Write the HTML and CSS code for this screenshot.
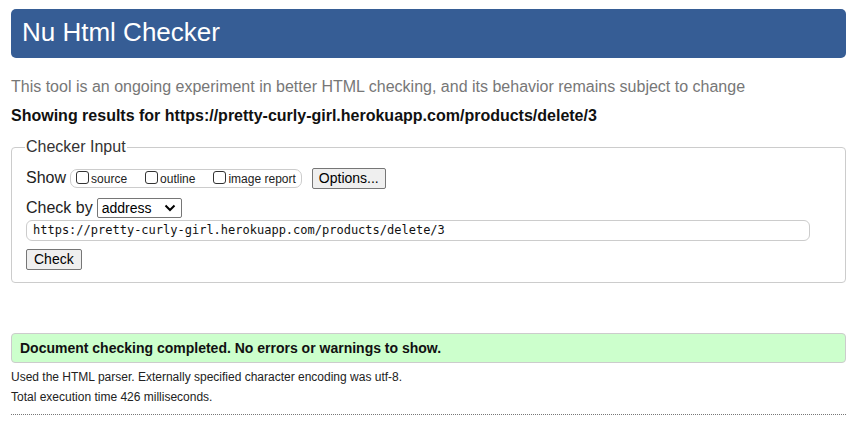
FILE: index.html
```html
<!DOCTYPE html>
<html>
<head>
<meta charset="utf-8">
<title>Nu Html Checker</title>
<link rel="stylesheet" href="styles.css">
</head>
<body>
<div class="page">
  <h1 class="header">Nu Html Checker</h1>
  <p class="intro">This tool is an ongoing experiment in better HTML checking, and its behavior remains subject to change</p>
  <p class="showing">Showing results for https://pretty-curly-girl.herokuapp.com/products/delete/3</p>
  <fieldset class="checker">
    <legend class="legend">Checker Input</legend>
    <div class="row row-show">
      <span class="lbl">Show</span>
      <span class="group">
        <label class="opt"><span class="cb"></span>source</label>
        <label class="opt"><span class="cb"></span>outline</label>
        <label class="opt"><span class="cb"></span>image report</label>
      </span>
      <span class="btn options">Options...</span>
    </div>
    <div class="row row-by">
      <span class="lbl">Check by</span>
      <span class="select">address<svg class="chev" width="12" height="8" viewBox="0 0 12 8"><path d="M1.5 1.5 L6 6 L10.5 1.5" fill="none" stroke="#000" stroke-width="2"/></svg></span>
    </div>
    <div class="url">https://pretty-curly-girl.herokuapp.com/products/delete/3</div>
    <div class="row row-check"><span class="btn check">Check</span></div>
  </fieldset>
  <div class="success">Document checking completed. No errors or warnings to show.</div>
  <p class="meta">Used the HTML parser. Externally specified character encoding was utf-8.</p>
  <p class="meta">Total execution time 426 milliseconds.</p>
  <div class="rule"></div>
</div>
</body>
</html>
```
FILE: styles.css
```css
html, body { margin: 0; padding: 0; background: #fff; }
body { font-family: "Liberation Sans", Arial, sans-serif; color: #222; }
.page { margin: 9px 19px 0 11px; }
.header {
  margin: 0;
  height: 49px;
  box-sizing: border-box;
  background: #365d95;
  border-radius: 5px;
  color: #fff;
  font-weight: normal;
  font-size: 26px;
  line-height: 46px;
  padding-left: 11px;
}
.intro { margin: 19px 0 0 0; font-size: 16px; line-height: 20px; color: #777; }
.showing { margin: 9px 0 0 0; font-size: 16px; line-height: 20px; font-weight: bold; color: #111; }
.checker {
  margin: 12px 0 0 0;
  padding: 4px 14px 12px 14px;
  border: 1px solid #ccc;
  border-radius: 4px;
}
.legend { font-size: 16px; color: #333; padding: 0 1px; margin-left: -1px; line-height: 18px; }
.row { display: flex; align-items: center; }
.lbl { font-size: 16px; color: #222; margin-right: 4px; }
.group {
  display: inline-flex; align-items: center;
  height: 19px; box-sizing: border-box;
  border: 1px solid #ccc; border-radius: 7px;
  padding: 0 5px 0 5px;
}
.opt { display: inline-flex; align-items: center; font-size: 12px; color: #222; margin-right: 18px; padding-top: 1px; }
.opt:last-child { margin-right: 0; }
.cb {
  width: 13px; height: 13px; box-sizing: border-box;
  border: 1px solid #333; border-radius: 3px; background: #fff;
  margin-right: 2px; margin-top: -3px;
}
.btn {
  display: inline-block; box-sizing: border-box;
  border: 1px solid #767676; border-radius: 2px;
  background: #efefef; font-size: 14px; color: #000;
  height: 21px; line-height: 19px; padding: 0 6px;
}
.options { margin-left: 10px; }
.row-show { height: 24px; margin-top: 6px; }
.row-by { height: 21px; margin-top: 7px; }
.select {
  display: inline-flex; align-items: center; justify-content: space-between;
  width: 85px; height: 20px; box-sizing: border-box;
  border: 1px solid #767676; border-radius: 2px;
  font-size: 14px; color: #000; padding: 0 5px 0 4px;
}
.chev { margin-top: 1px; }
.url {
  margin-top: 2px;
  height: 21px; box-sizing: border-box;
  width: 784px;
  border: 1px solid #ccc; border-radius: 6px;
  font-family: "DejaVu Sans Mono", "Liberation Mono", monospace; font-size: 12px;
  line-height: 19px; padding-left: 6px; color: #111;
}
.row-check { margin-top: 8px; }
.check { height: 21px; padding: 0 7px; }
.success {
  margin-top: 50px;
  height: 30px; box-sizing: border-box;
  background: #ccffcc; border: 1px solid #ccc; border-radius: 4px;
  font-size: 14px; font-weight: bold; line-height: 28px; padding-left: 8px; color: #111;
}
.meta { margin: 7px 0 0 0; font-size: 12px; line-height: 14px; color: #222; }
.meta + .meta { margin-top: 6px; }
.rule { margin-top: 10px; border-top: 1px dotted #777; }
```
